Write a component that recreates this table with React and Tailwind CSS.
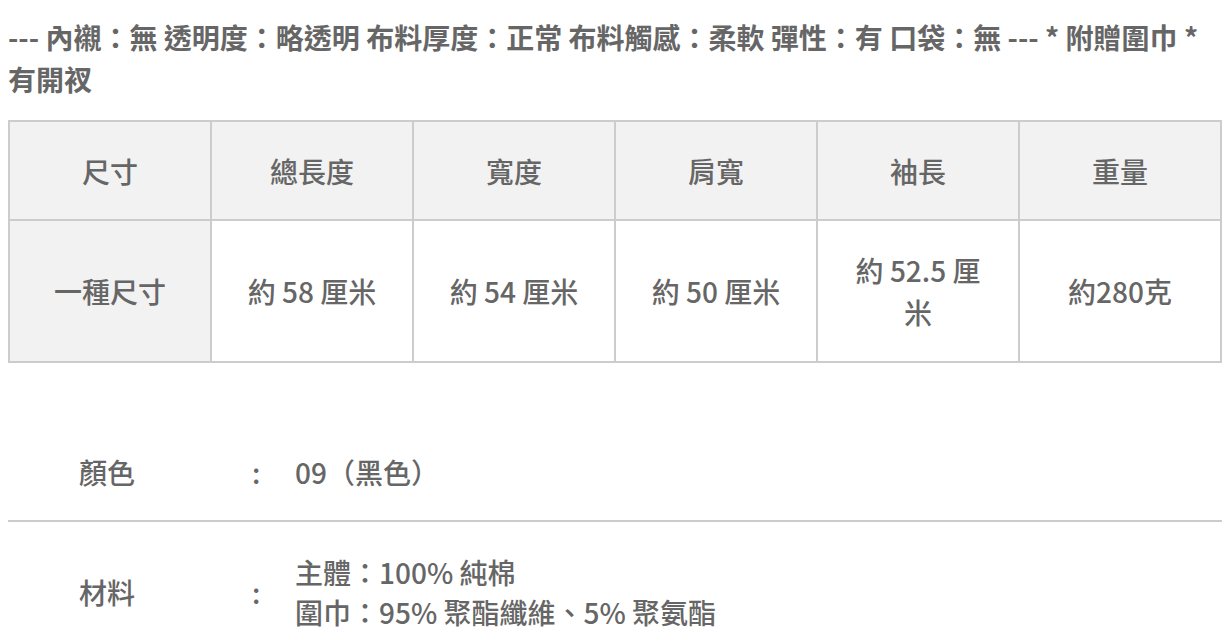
import React from 'react';

const headers = ['尺寸', '總長度', '寬度', '肩寬', '袖長', '重量'];
const values = ['約 58 厘米', '約 54 厘米', '約 50 厘米', '約 52.5 厘米', '約280克'];

const App = () => {
  return (
    <div
      className="min-h-screen bg-white px-2 text-[#666]"
      style={{ fontFamily: '"Noto Sans CJK TC", "Noto Sans", sans-serif' }}
    >
      {/* description */}
      <p className="pt-4 text-[28px] font-bold leading-[42px]">
        --- 內襯：無 透明度：略透明 布料厚度：正常 布料觸感：柔軟 彈性：有 口袋：無 --- * 附贈圍巾 * 有開衩
      </p>

      {/* size table */}
      <table className="mt-5 w-full table-fixed border-collapse text-[28px] font-medium">
        <thead>
          <tr className="bg-[#f2f2f2]">
            {headers.map((h) => (
              <th key={h} className="h-[99px] border-2 border-[#cccccc] px-8 text-center font-medium">
                {h}
              </th>
            ))}
          </tr>
        </thead>
        <tbody>
          <tr>
            <td className="h-[142px] border-2 border-[#cccccc] bg-[#f2f2f2] px-8 text-center">一種尺寸</td>
            {values.map((v) => (
              <td key={v} className="border-2 border-[#cccccc] px-8 text-center leading-[42px]">
                {v}
              </td>
            ))}
          </tr>
        </tbody>
      </table>

      {/* spec list */}
      <div className="mt-[88px] text-[28px] font-medium">
        <div className="flex items-center border-b-2 border-[#cccccc] pb-[27px] leading-[42px]">
          <div className="w-[244px] pl-[71px]">顏色</div>
          <div className="w-[43px]">:</div>
          <div>09（黑色）</div>
        </div>
        <div className="flex items-center pt-[30px] leading-[40px]">
          <div className="w-[244px] pl-[71px]">材料</div>
          <div className="w-[43px]">:</div>
          <div>
            <div>主體：100% 純棉</div>
            <div>圍巾：95% 聚酯纖維、5% 聚氨酯</div>
          </div>
        </div>
      </div>
    </div>
  );
};

export default App;
